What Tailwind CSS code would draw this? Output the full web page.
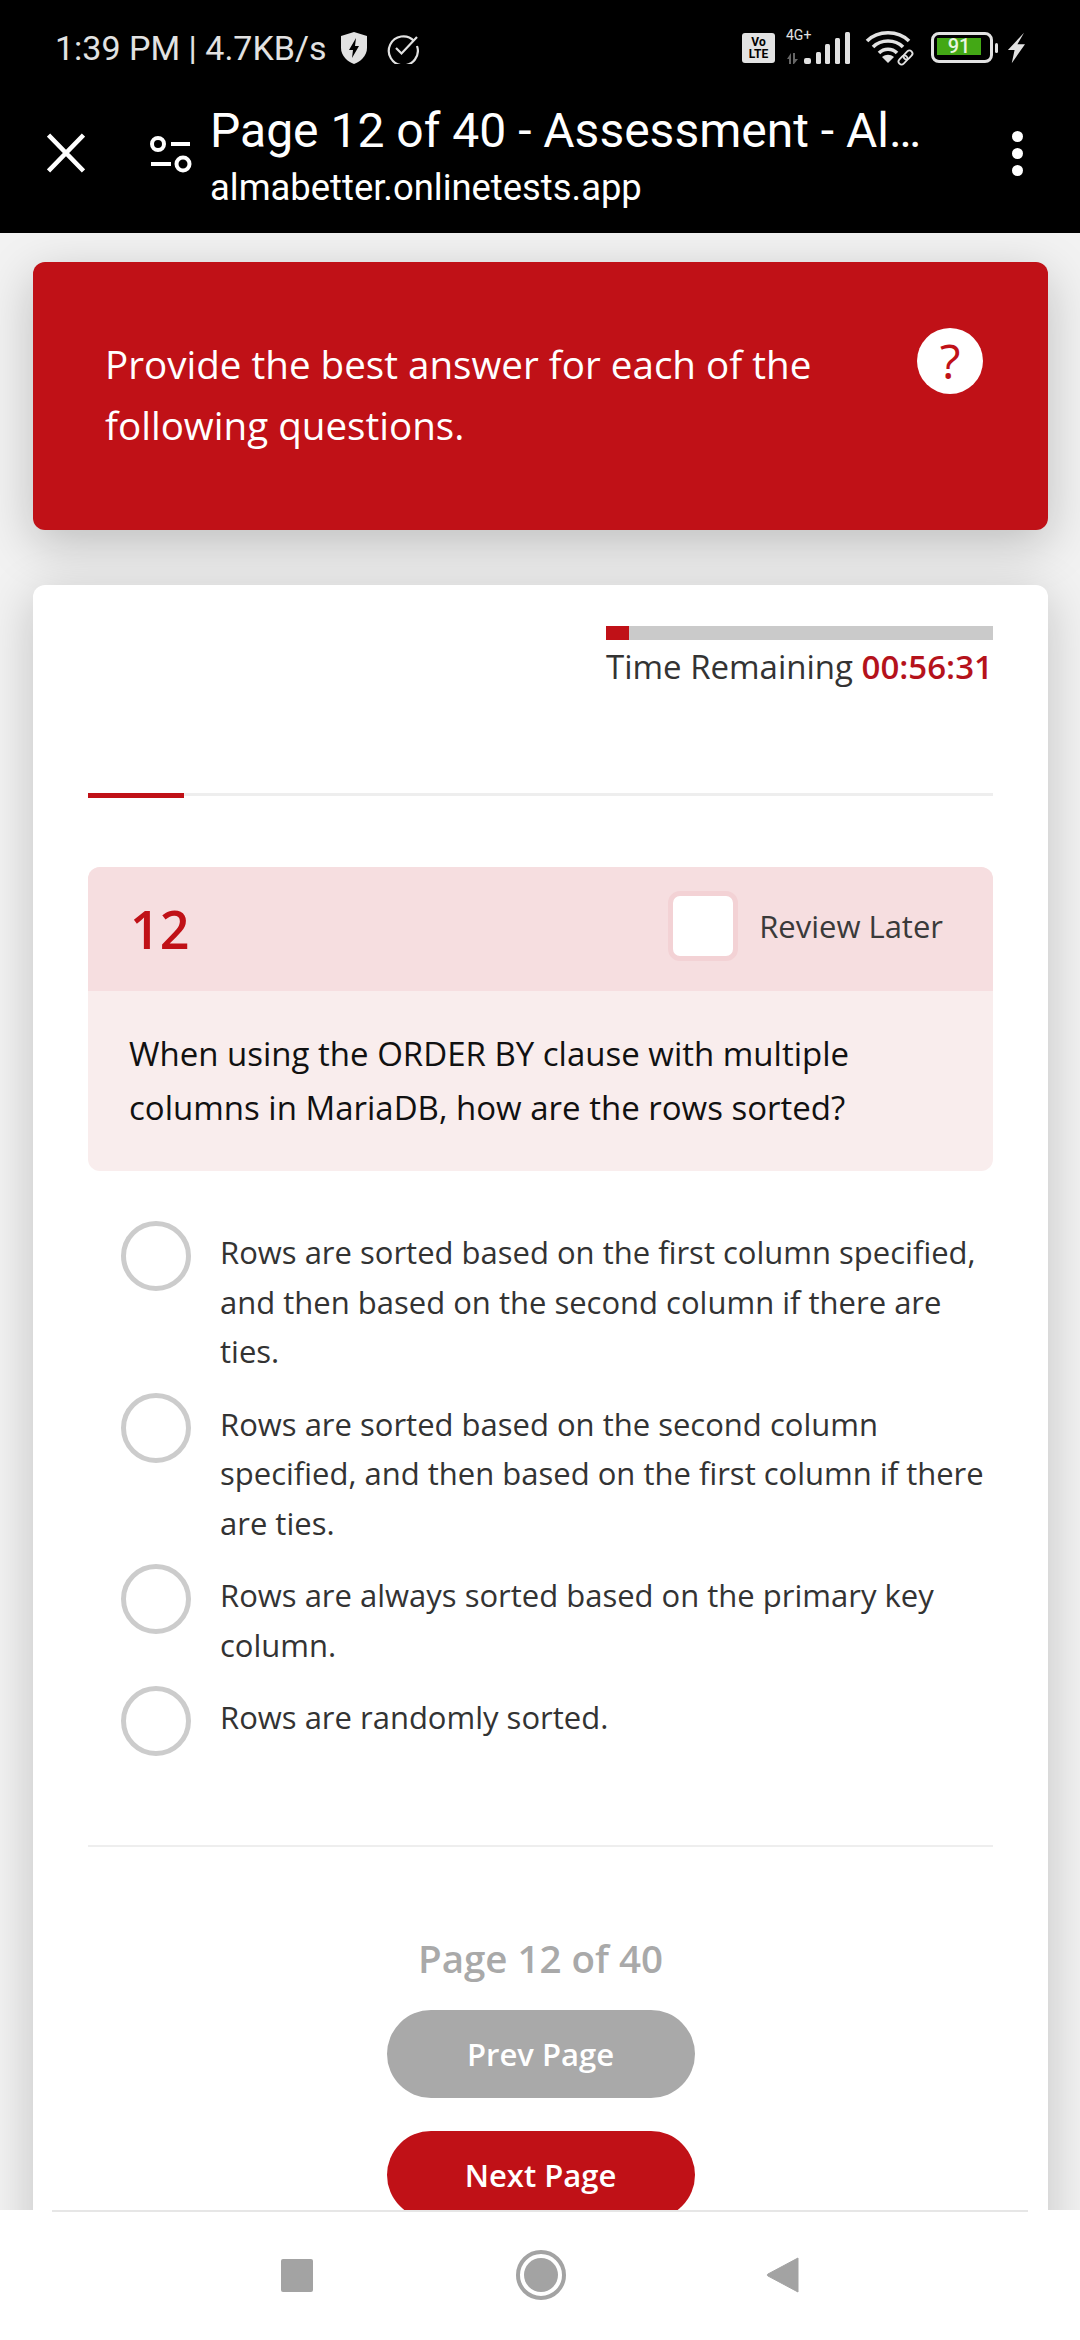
<!DOCTYPE html>
<html lang="en">
<head>
  <meta charset="UTF-8" />
  <title>Page 12 of 40 - Assessment</title>
  <script src="https://cdn.jsdelivr.net/npm/@tailwindcss/browser@4"></script>
</head>
<body class="bg-[#f2f2f2] font-['Open_Sans',sans-serif]">
<div class="w-[1080px] h-[2340px] flex flex-col overflow-hidden">

  <!-- Status bar + custom tab header -->
  <header class="bg-black h-[233px] shrink-0 relative z-10 font-['Roboto',sans-serif]">
    <div class="h-[95px] pl-[55px] pr-[55px] flex items-center justify-between text-[#e2e2e2]">
      <div class="flex items-center">
        <span class="text-[34px] leading-none">1:39 PM | 4.7KB/s</span>
        <svg class="ml-[13px]" width="28" height="34" viewBox="0 0 28 34"><path d="M14 1 L27 5 V17 C27 25 20 31 14 33 C8 31 1 25 1 17 V5 Z" fill="#e2e2e2"/><path d="M16 7 L9 19 H13 L12 27 L19 15 H15 Z" fill="#000"/></svg>
        <svg class="ml-[19px]" width="32" height="32" viewBox="0 0 32 32" fill="none" stroke="#e2e2e2" stroke-width="2.2"><path d="M27 9 A14.5 14.5 0 1 0 30 14"/><path d="M9 16 L14.5 21.5 L30 5"/></svg>
      </div>
      <div class="flex items-center">
        <div class="w-[33px] h-[30px] bg-[#e2e2e2] rounded-[3px] flex flex-col items-center justify-center text-black text-[12px] leading-[12px] font-bold">
          <span>Vo</span><span>LTE</span>
        </div>
        <div class="relative w-[65px] h-[36px] ml-[11px]">
          <span class="absolute left-0 top-[-3px] text-[14px] leading-[16px]">4G+</span>
          <svg class="absolute left-0 top-0" width="65" height="36" viewBox="0 0 65 36"><path d="M1 29 L5 23 V34 H3 V29 Z M7 23 H9 V29 H12 L8 34 H7 Z" fill="#666"/><rect x="18" y="28" width="7" height="6" rx="2" fill="#e2e2e2"/><rect x="30" y="22" width="5" height="12" rx="1.5" fill="#e2e2e2"/><rect x="39" y="14" width="5" height="20" rx="1.5" fill="#e2e2e2"/><rect x="49" y="8" width="5" height="26" rx="1.5" fill="#e2e2e2"/><rect x="59" y="2" width="5" height="32" rx="1.5" fill="#e2e2e2"/></svg>
        </div>
        <svg class="ml-[14px]" width="50" height="36" viewBox="0 0 50 36" fill="none" stroke="#e2e2e2"><path d="M2 11 C13 0 33 0 44 11" stroke-width="3.6"/><path d="M8 17 C16 9 30 9 38 17" stroke-width="3.6"/><path d="M14 23 C19 18 27 18 32 23" stroke-width="3.6"/><path d="M17 27 L23 33 L29 27 C25 24 21 24 17 27 Z" fill="#e2e2e2" stroke="none"/><g stroke-width="1.8"><rect x="33" y="27" width="10" height="6" rx="3" transform="rotate(-45 38 30)"/><rect x="38" y="22" width="10" height="6" rx="3" transform="rotate(-45 43 25)"/></g></svg>
        <div class="ml-[16px] w-[62px] h-[31px] border-[3px] border-[#e2e2e2] rounded-[8px] p-[3px] flex">
          <div class="w-[44px] h-[17px] bg-[#43a815] text-[#e8f5df] text-[20px] leading-[17px] font-medium text-center">91</div>
        </div>
        <div class="ml-[2px] w-[3px] h-[10px] rounded-[2px] bg-[#e2e2e2]"></div>
        <svg class="ml-[9px]" width="18" height="32" viewBox="0 0 19 32"><path d="M18 0 L1 18 H8 L5 32 L19 12 H11 Z" fill="#e2e2e2"/></svg>
      </div>
    </div>
    <div class="h-[138px] pb-[22px] flex items-center text-white">
      <svg class="ml-[47px]" width="38" height="40" viewBox="0 0 38 40" stroke="#fff" stroke-width="4.6" fill="none"><path d="M1.5 2 L36.5 38 M36.5 2 L1.5 38"/></svg>
      <svg class="ml-[65px] mt-[3px]" width="42" height="37" viewBox="0 0 42 37" stroke="#fff" stroke-width="4" fill="none"><circle cx="8" cy="8" r="6"/><path d="M21 8 H40"/><path d="M1 28 H21"/><circle cx="33" cy="28" r="6.5"/></svg>
      <div class="ml-[18px] mt-[8px] w-[716px]">
        <div class="text-[48px] leading-[54px] whitespace-nowrap">Page 12 of 40 - Assessment - Al…</div>
        <div class="text-[36.4px] leading-[44px] mt-[8px]">almabetter.onlinetests.app</div>
      </div>
      <div class="ml-[86px] flex flex-col gap-[6px]">
        <span class="w-[11px] h-[11px] rounded-full bg-white"></span>
        <span class="w-[11px] h-[11px] rounded-full bg-white"></span>
        <span class="w-[11px] h-[11px] rounded-full bg-white"></span>
      </div>
    </div>
  </header>

  <!-- Page content -->
  <main class="flex-1 overflow-hidden pl-[33px] pr-[32px] pt-[29px]">
    <section class="h-[268px] bg-[#c01117] rounded-[12px] shadow-[0_14px_50px_rgba(0,0,0,0.22)] pl-[72px] pr-[65px] pt-[76px] flex justify-between items-start text-white">
      <p class="text-[38.6px] leading-[61px] w-[745px] mt-[-4px]">Provide the best answer for each of the following questions.</p>
      <div class="w-[66px] h-[66px] mt-[-10px] rounded-full bg-white text-[#c01117] text-[48px] leading-[66px] text-center">?</div>
    </section>

    <section class="mt-[55px] bg-white rounded-[12px] shadow-[0_10px_50px_rgba(0,0,0,0.2)] px-[55px] pt-[41px] pb-[60px]">
      <!-- Timer -->
      <div class="ml-[518px] w-[387px]">
        <div class="h-[14px] bg-[#cacaca]"><div class="w-[23px] h-[14px] bg-[#c01117]"></div></div>
        <div class="mt-[5px] text-[33px] leading-[44px] text-[#333] whitespace-nowrap">Time Remaining <span class="text-[#b5121b] font-semibold">00:56:31</span></div>
      </div>

      <!-- Question progress -->
      <div class="mt-[104px] h-[3px] bg-[#eeeeee]"><div class="w-[96px] h-[5px] bg-[#c01117]"></div></div>

      <!-- Question -->
      <div class="mt-[71px] rounded-[12px] overflow-hidden bg-[#f9eded]">
        <div class="h-[124px] bg-[#f6dee0] pl-[42px] pr-[50px] flex items-center justify-between">
          <span class="text-[52px] text-[#c01117] font-semibold leading-none">12</span>
          <div class="flex items-center mt-[-6px]">
            <span class="w-[70px] h-[70px] bg-white border-[5px] border-[#f3d2d5] rounded-[12px]"></span>
            <span class="ml-[21px] text-[31px] text-[#3a3a3a] leading-none">Review Later</span>
          </div>
        </div>
        <p class="h-[180px] px-[41px] pt-[36px] text-[33px] leading-[54px] text-[#111]">When using the ORDER BY clause with multiple columns in MariaDB, how are the rows sorted?</p>
      </div>

      <!-- Answers -->
      <div class="mt-[50px] pl-[33px] flex flex-col gap-[16px] text-[31px] leading-[49.5px] text-[#333]">
        <label class="flex items-start">
          <span class="w-[70px] h-[70px] shrink-0 rounded-full border-[5px] border-[#cccccc]"></span>
          <span class="ml-[29px] mt-[7px]">Rows are sorted based on the first column specified, and then based on the second column if there are ties.</span>
        </label>
        <label class="flex items-start">
          <span class="w-[70px] h-[70px] shrink-0 rounded-full border-[5px] border-[#cccccc]"></span>
          <span class="ml-[29px] mt-[7px]">Rows are sorted based on the second column specified, and then based on the first column if there are ties.</span>
        </label>
        <label class="flex items-start">
          <span class="w-[70px] h-[70px] shrink-0 rounded-full border-[5px] border-[#cccccc]"></span>
          <span class="ml-[29px] mt-[7px]">Rows are always sorted based on the primary key column.</span>
        </label>
        <label class="flex items-start">
          <span class="w-[70px] h-[70px] shrink-0 rounded-full border-[5px] border-[#cccccc]"></span>
          <span class="ml-[29px] mt-[7px]">Rows are randomly sorted.</span>
        </label>
      </div>

      <div class="mt-[89px] h-[2px] bg-[#eeeeee]"></div>

      <!-- Pager -->
      <div class="mt-[86px] flex flex-col items-center">
        <div class="text-[38.5px] leading-[50px] font-semibold text-[#a9a9a9]">Page 12 of 40</div>
        <button class="mt-[27px] w-[308px] h-[88px] rounded-full bg-[#a9a9a9] text-white text-[31px] font-semibold">Prev Page</button>
        <button class="mt-[33px] w-[308px] h-[88px] rounded-full bg-[#c01117] text-white text-[31px] font-semibold">Next Page</button>
      </div>
    </section>
  </main>

  <!-- Android nav bar -->
  <nav class="h-[130px] shrink-0 bg-white relative z-10 flex flex-col items-center">
    <div class="w-[976px] h-[2px] bg-[#e6e6e6]"></div>
    <div class="mt-[38px] flex items-center">
      <span class="w-[32px] h-[33px] rounded-[2px] bg-[#a3a3a3]"></span>
      <svg class="ml-[203px]" width="50" height="50" viewBox="0 0 50 50"><circle cx="25" cy="25" r="23" fill="none" stroke="#a3a3a3" stroke-width="4"/><circle cx="25" cy="25" r="17" fill="#a3a3a3"/></svg>
      <svg class="ml-[200px]" width="33" height="38" viewBox="0 0 33 38"><path d="M32 2 V36 L2 20 C1 19.5 1 18.5 2 18 Z" fill="#a3a3a3" stroke="#a3a3a3" stroke-linejoin="round" stroke-width="1"/></svg>
    </div>
  </nav>
</div>
</body>
</html>
